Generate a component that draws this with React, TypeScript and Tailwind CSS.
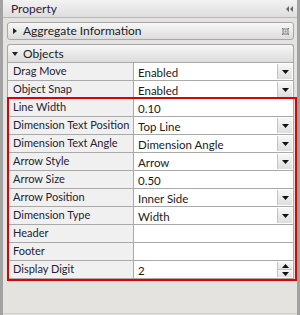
import React from 'react';

type Row = {
  label: string;
  value: string;
  kind?: 'drop' | 'spin';
};

const topRows: Row[] = [
  { label: 'Drag Move', value: 'Enabled', kind: 'drop' },
  { label: 'Object Snap', value: 'Enabled', kind: 'drop' },
];

const markedRows: Row[] = [
  { label: 'Line Width', value: '0.10' },
  { label: 'Dimension Text Position', value: 'Top Line', kind: 'drop' },
  { label: 'Dimension Text Angle', value: 'Dimension Angle', kind: 'drop' },
  { label: 'Arrow Style', value: 'Arrow', kind: 'drop' },
  { label: 'Arrow Size', value: '0.50' },
  { label: 'Arrow Position', value: 'Inner Side', kind: 'drop' },
  { label: 'Dimension Type', value: 'Width', kind: 'drop' },
  { label: 'Header', value: '' },
  { label: 'Footer', value: '' },
  { label: 'Display Digit', value: '2', kind: 'spin' },
];

const Down = () => (
  <svg width="7" height="4" viewBox="0 0 7 4">
    <path d="M0 0h7L3.5 4z" fill="#111" />
  </svg>
);

const Up = () => (
  <svg width="7" height="4" viewBox="0 0 7 4">
    <path d="M0 4h7L3.5 0z" fill="#111" />
  </svg>
);

const PropRow: React.FC<{ row: Row }> = ({ row }) => (
  <div className="flex h-[18px] border-b border-[#a9a9a9]">
    <div className="w-[126px] shrink-0 bg-[#f0f0f0] border-r border-[#a9a9a9] pl-[5px] leading-[15px] text-[11px] text-[#262233] whitespace-nowrap">
      {row.label}
    </div>
    <div className="flex-1 flex bg-white">
      <div className="flex-1 pl-[4px] pt-[2px] leading-[15px] text-[11.5px] text-[#1a1a1a]">{row.value}</div>
      {row.kind === 'drop' && (
        <div className="w-[15px] my-[1px] mr-[1px] flex items-center justify-center border-l border-[#c4c4c4] bg-gradient-to-b from-[#f7f7f7] to-[#dedede]">
          <Down />
        </div>
      )}
      {row.kind === 'spin' && (
        <div className="w-[15px] my-[1px] mr-[1px] flex flex-col border-l border-[#c4c4c4]">
          <div className="flex-1 flex items-center justify-center border-b border-[#c4c4c4] bg-gradient-to-b from-[#f7f7f7] to-[#e2e2e2]">
            <Up />
          </div>
          <div className="flex-1 flex items-center justify-center bg-gradient-to-b from-[#f7f7f7] to-[#e2e2e2]">
            <Down />
          </div>
        </div>
      )}
    </div>
  </div>
);

export default function App() {
  return (
    <div
      className="w-[300px] h-[315px] flex bg-[#e5e3e0] text-[11.5px] overflow-hidden"
      style={{ fontFamily: 'Lato, "Open Sans", sans-serif' }}
    >
      <div className="w-[3px] shrink-0 bg-[#a2a2a2]" />
      <div className="flex-1 flex flex-col">
        {/* title bar */}
        <div className="h-[18px] flex items-center justify-between pl-[8px] pr-[3px] bg-gradient-to-b from-[#f2f2f2] to-[#dedede] border-b border-[#b8b8b8]">
          <span className="text-[12px] text-[#2a2040] leading-none pt-[1px]">Property</span>
          <svg width="8" height="6" viewBox="0 0 8 6">
            <path d="M0 3l3-3v6zM4 3l3-3v6z" fill="#666" />
          </svg>
        </div>

        <div className="flex-1 flex flex-col pl-[4px] pr-[3px] pt-[4px]">
          {/* Aggregate Information */}
          <div className="h-[18px] flex items-center rounded-[3px] border border-[#a8a8a8] bg-gradient-to-b from-[#f7f7f7] to-[#dcdcdc] pl-[5px] pr-[4px]">
            <svg width="4" height="6" viewBox="0 0 4 6" className="mr-[6px]">
              <path d="M0 0l4 3-4 3z" fill="#222" />
            </svg>
            <span className="flex-1 text-[12px] text-[#222]">Aggregate Information</span>
            <svg width="7" height="7" viewBox="0 0 7 7">
              <rect x="1" y="1" width="5" height="5" fill="none" stroke="#777" />
              <rect x="2.5" y="2.5" width="2" height="2" fill="#999" />
              <path d="M0 0h1v1H0zM6 0h1v1H6zM0 6h1v1H0zM6 6h1v1H6z" fill="#777" />
            </svg>
          </div>

          {/* Objects */}
          <div className="mt-[4px] h-[18px] flex items-center rounded-t-[3px] border border-b-0 border-[#a8a8a8] bg-gradient-to-b from-[#f7f7f7] to-[#dcdcdc] pl-[4px]">
            <svg width="6" height="4" viewBox="0 0 6 4" className="mr-[5px]">
              <path d="M0 0h6L3 4z" fill="#222" />
            </svg>
            <span className="text-[12px] text-[#222]">Objects</span>
          </div>

          <div className="border-x border-t border-[#a9a9a9]">
            {topRows.map((r) => (
              <PropRow key={r.label} row={r} />
            ))}
            <div className="relative">
              {markedRows.map((r) => (
                <PropRow key={r.label} row={r} />
              ))}
              <div className="absolute -left-[1px] -right-[4px] -top-[2px] -bottom-[2px] border-2 border-[#e00000] pointer-events-none" />
            </div>
          </div>
        </div>
        <div className="h-[2px] border-t border-[#cfcfcf]" />
      </div>
      <div className="w-[3px] shrink-0 bg-[#a2a2a2]" />
    </div>
  );
}
